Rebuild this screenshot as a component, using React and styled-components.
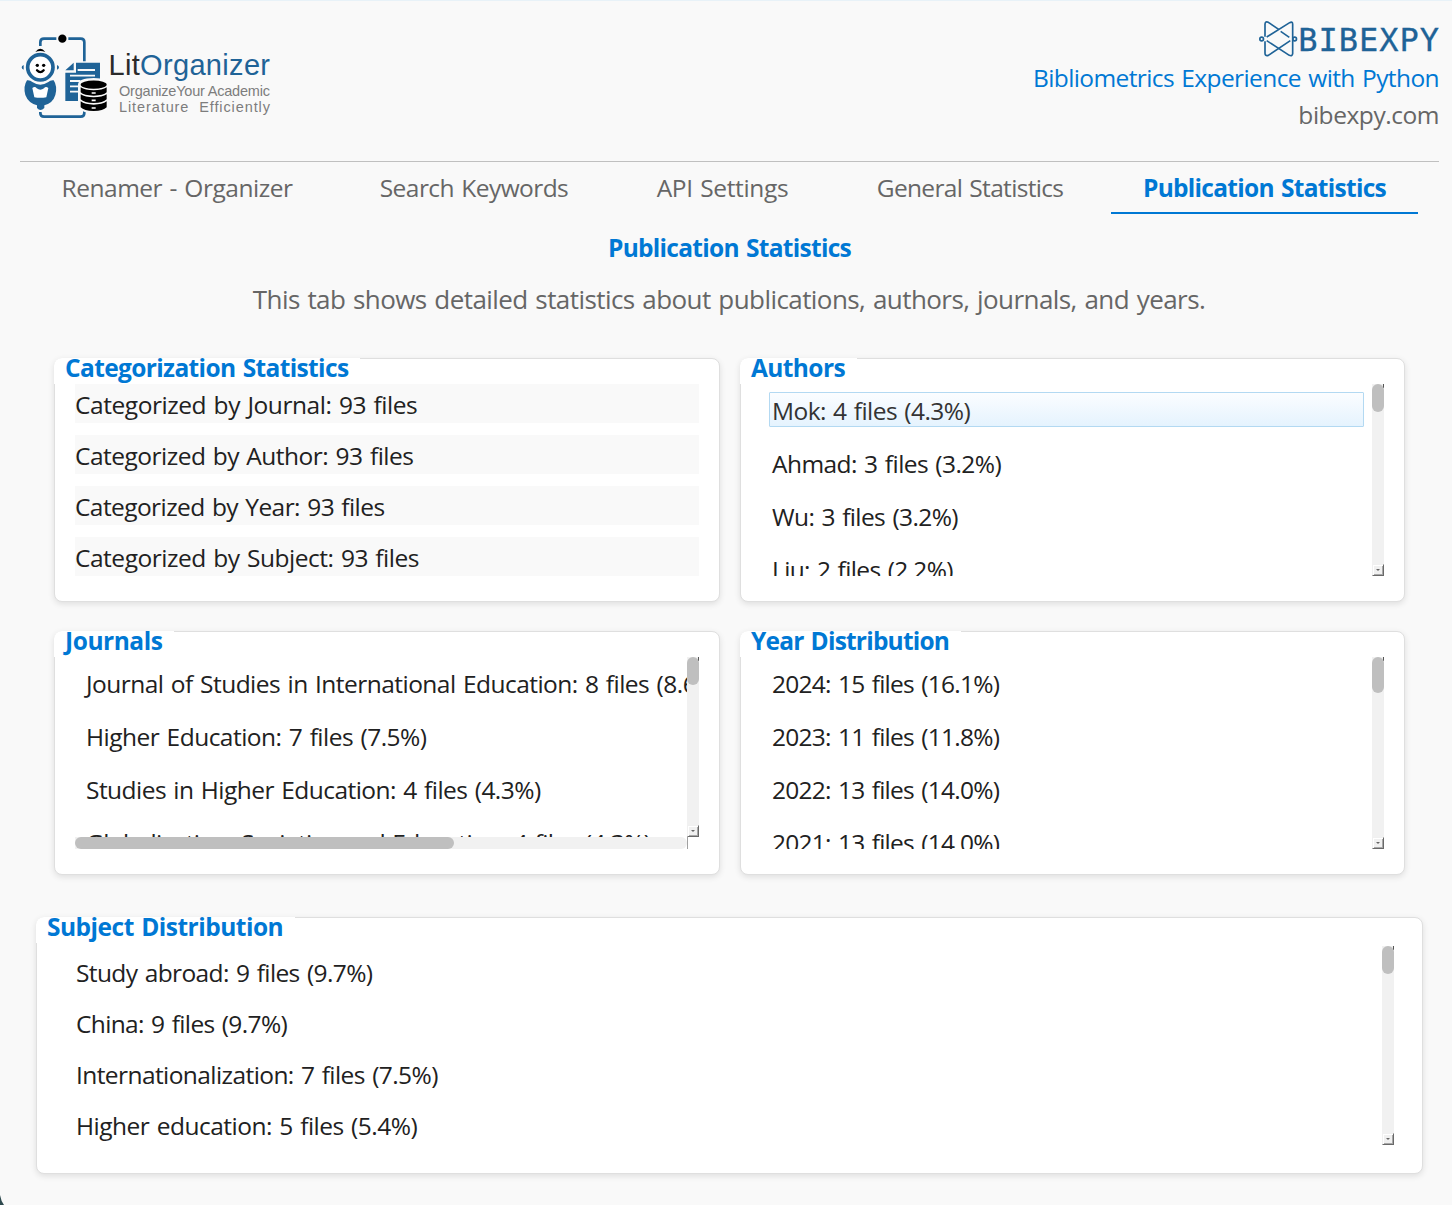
import React from 'react';
import styled, { createGlobalStyle, css } from 'styled-components';

const GlobalStyle = createGlobalStyle`
  *, *::before, *::after { box-sizing: border-box; }
  body {
    margin: 0;
    background: #f9f9f9;
    color: #212121;
    font: 24.5px "Open Sans", "Noto Sans", sans-serif;
    word-spacing: 1.5px;
    overflow: hidden;
  }
`;

const Window = styled.main`
  position: relative;
  width: 1452px;
  height: 1205px;
  overflow: hidden;
  border-top: 1px solid #e8f2f8;
  white-space: nowrap;
`;

const Header = styled.header`
  display: flex;
  justify-content: space-between;
  align-items: flex-start;
  height: 161px;
  margin: 0 13px 0 20px;
  padding-top: 17px;
  border-bottom: 1px solid #c0c0c0;
`;

const AppLogo = styled.svg`
  display: block;
  width: 256px;
  height: 92px;
  margin-top: 12px;
  word-spacing: 0;
`;

const Brand = styled.div`
  display: flex;
  flex-direction: column;
  align-items: flex-end;
`;

const BrandRow = styled.div`
  display: flex;
  height: 41px;
`;

const BrandMark = styled.svg`
  display: block;
  width: 40px;
  height: 42px;
`;

const BrandName = styled.span`
  color: #1f6397;
  font: 32px/44px "DejaVu Sans Mono", monospace;
  letter-spacing: 1px;
  margin-right: -1px;
  -webkit-text-stroke: 0.3px #1f6397;
`;

const BrandLine = styled.span`
  color: ${(p) => (p.$accent ? '#0078d4' : '#666')};
  line-height: 37px;
  letter-spacing: ${(p) => p.$track}px;
`;

const TabBar = styled.nav`
  display: grid;
  grid-template-columns: 310px 284px 213px 282px 307px;
  height: 52px;
  margin-left: 22px;
`;

const Tab = styled.a`
  text-align: center;
  line-height: 51px;
  height: 52px;
  color: #666;
  letter-spacing: ${(p) => p.$track}px;
  border-bottom: 2px solid transparent;
  ${(p) =>
    p.$active &&
    css`
      color: #0078d4;
      font-weight: 700;
      border-bottom-color: #0078d4;
    `}
`;

const Title = styled.h1`
  margin: 16px 0 0 7px;
  text-align: center;
  color: #0078d4;
  font-size: 24.5px;
  font-weight: 700;
  line-height: 36px;
  letter-spacing: -0.71px;
`;

const Subtitle = styled.p`
  margin: 13px 0 0 6px;
  text-align: center;
  color: #666;
  font-size: 26px;
  line-height: 40px;
  letter-spacing: -0.57px;
`;

const CardGrid = styled.div`
  display: grid;
  grid-template-columns: 666px 665px;
  gap: 29px 20px;
  margin: 39px 0 42px 54px;
`;

const Card = styled.section`
  background: #fff;
  border: 1px solid #dfdfdf;
  border-radius: 8px;
  box-shadow: 0 2px 6px rgba(0, 0, 0, 0.11);
  height: ${(p) => (p.$wide ? 257 : 244)}px;
  ${(p) =>
    p.$wide &&
    css`
      width: 1387px;
      margin-left: 36px;
    `}
`;

const Legend = styled.h2`
  width: ${(p) => p.$width}px;
  height: 26px;
  margin: -1px 0 0 -1px;
  padding-left: 11px;
  background: #fff;
  border-top-left-radius: 8px;
  color: #0078d4;
  font-size: 24.5px;
  font-weight: 700;
  line-height: 20px;
  letter-spacing: ${(p) => p.$track}px;
`;

const CategoryList = styled.div`
  display: grid;
  gap: 12px;
  margin: 0 20px;
`;

const CategoryRow = styled.div`
  height: 39px;
  line-height: 41px;
  background: #f9f9f9;
  letter-spacing: ${(p) => p.$track}px;
`;

const ListBox = styled.div`
  display: grid;
  grid-template-columns: 1fr 12px;
  grid-template-rows: 1fr;
  height: 192px;
  margin: 0 20px;
  ${(p) => p.$hscroll && css`grid-template-rows: 1fr 12px;`}
  ${(p) =>
    p.$wide &&
    css`
      height: 199px;
      margin: 3px 28px 0 20px;
      padding-left: 8px;
    `}
`;

const Items = styled.ul`
  list-style: none;
  margin: 0;
  padding: 8px;
  min-width: 0;
  min-height: 0;
  overflow: hidden;
  display: flex;
  flex-direction: column;
  gap: ${(p) => p.$gap}px;
`;

const Item = styled.li`
  flex: none;
  height: 35px;
  line-height: 35px;
  padding-left: 2px;
  border: 1px solid transparent;
  border-radius: 1px;
  letter-spacing: ${(p) => p.$track}px;
  ${(p) =>
    p.$selected &&
    css`
      color: #333;
      border-color: #b3d9f2;
      background: linear-gradient(#fbfdff, #e5f3fe);
    `}
`;

const VTrack = styled.div`
  display: flex;
  flex-direction: column;
  justify-content: space-between;
  background: linear-gradient(#555, #555) top right / 1px 4px no-repeat, #f1f1f1;
`;

const VThumb = styled.div`
  height: ${(p) => p.$size}px;
  border-radius: 6px;
  background: #bfbfbf;
`;

const StepButton = styled.div`
  display: grid;
  place-items: center;
  height: 12px;
  background: #f0f0f0;
  border: 1px solid;
  border-color: #f0f0f0 #696969 #696969 #f0f0f0;
  box-shadow: inset 1px 1px #fff, inset -1px -1px #a8a8a8;

  &::before {
    content: '';
    border: 2px solid transparent;
    border-top-color: #666;
    border-bottom: 0;
  }
`;

const HTrack = styled.div`
  background: #f1f1f1;
  border-radius: 0 6px 6px 0;
`;

const HThumb = styled.div`
  width: 379px;
  height: 12px;
  border-radius: 6px;
  background: #bfbfbf;
`;

const Corner = styled.div`
  border-left: 1px solid #a0a0a0;
`;

const WindowEdge = styled.svg`
  position: absolute;
  left: 0;
  bottom: 0;
  width: 4px;
  height: 10px;
`;

const BLUE = '#1f6397';

function LitOrganizerLogo() {
  return (
    <AppLogo viewBox="0 0 256 92">
      <g transform="translate(-5 -2) scale(0.33333)">
        <g fill="none" stroke={BLUE} strokeWidth="8">
          <path d="M76 54V43q0-11 11-11h37M160 32h37q11 0 11 11v57" />
          <path d="M76 252v3q0 11 11 11h110q11 0 11-11v-6" />
        </g>
        <circle cx="142" cy="32" r="12.5" />
        <path d="M61 72Q76 52 91 72Q76 66 61 72Z" />
        <circle cx="76" cy="118" r="38" fill="#fff" stroke={BLUE} strokeWidth="11" />
        <path d="M26 111v14q-6-2-6-7t6-7zM126 111v14q6-2 6-7t-6-7z" fill={BLUE} />
        <circle cx="67" cy="112" r="5" />
        <circle cx="86" cy="112" r="5" />
        <path d="M66 127q10 11 20 0" fill="none" stroke="#000" strokeWidth="7" strokeLinecap="round" />
        <path
          d="M36 157Q46 156 52 162Q76 178 100 162Q106 156 116 157Q128 175 121 201Q114 225 88 232V240Q76 252 66 240V232Q40 225 31 201Q24 175 36 157Z"
          fill={BLUE}
        />
        <path d="M52 180Q60 174 65 181Q76 189 87 181Q92 174 100 180L94 208Q76 211 58 208Z" fill="#fff" />
        <path d="M151 127L176 104V127Z" fill={BLUE} />
        <path d="M183 104H255V170H200V219H151V134H183Z" fill={BLUE} />
        <path
          d="M188 126H240M165 143H240M165 159H196M165 175H196M165 191H196"
          fill="none"
          stroke="#f9f9f9"
          strokeWidth="5.5"
        />
        <path d="M189 170Q190 150 236 150T283 170V240Q270 256 236 256T189 238Z" fill="#f9f9f9" />
        <ellipse cx="236" cy="170" rx="39" ry="12.5" />
        <path d="M197 178Q210 187 236 187T275 178V193Q265 203 236 203T197 193Z" />
        <path d="M197 199Q210 208 236 208T275 199V214Q265 225 236 225T197 214Z" />
        <path d="M197 220Q210 230 236 230T275 220V238Q265 249 236 249T197 238Z" />
        <path d="M230 195h12M230 217h12M230 240h12" stroke="#fff" strokeWidth="5" />
      </g>
      <g fontFamily="Liberation Sans, Arial, sans-serif">
        <text x="88.5" y="45" fontSize="29" textLength="161.5" fill="#2b2b2b">
          Lit<tspan fill={BLUE}>Organizer</tspan>
        </text>
        <g fill="#7d7d7d" fontSize="14.5">
          <text x="99" y="66" textLength="151">OrganizeYour Academic</text>
          <text x="99" y="82" textLength="151">Literature{'\u00a0 '}Efficiently</text>
        </g>
      </g>
    </AppLogo>
  );
}

function BibexpyMark() {
  return (
    <BrandMark viewBox="714 24 120 126" fill="none" stroke={BLUE} strokeWidth="5" strokeLinejoin="round">
      <path d="M735 80V42Q736 33 745 37L776 58M782 64L808 82" />
      <path d="M740 81L809 38Q818 33 818 43V131Q817 140 808 136L740 92" />
      <path d="M811 92L745 136Q735 139 735 130V94" />
      <circle cx="725" cy="87" r="5.5" />
      <circle cx="824" cy="87" r="5.5" />
    </BrandMark>
  );
}

function ScrollBar({ thumb }) {
  return (
    <VTrack>
      <VThumb $size={thumb} />
      <StepButton />
    </VTrack>
  );
}

function StatList({ rows, gap = 18, thumb = 28, selected, hscroll, wide }) {
  return (
    <ListBox $hscroll={hscroll} $wide={wide}>
      <Items $gap={gap}>
        {rows.map(([label, track], i) => (
          <Item key={label} $track={track} $selected={i === selected}>
            {label}
          </Item>
        ))}
      </Items>
      <ScrollBar thumb={thumb} />
      {hscroll && (
        <>
          <HTrack>
            <HThumb />
          </HTrack>
          <Corner />
        </>
      )}
    </ListBox>
  );
}

const TABS = [
  ['Renamer - Organizer', -0.48],
  ['Search Keywords', -0.56],
  ['API Settings', -0.35],
  ['General Statistics', -0.68],
  ['Publication Statistics', -0.71],
];

const CATEGORIES = [
  ['Categorized by Journal: 93 files', -0.44],
  ['Categorized by Author: 93 files', -0.51],
  ['Categorized by Year: 93 files', -0.58],
  ['Categorized by Subject: 93 files', -0.47],
];

const AUTHORS = [
  ['Mok: 4 files (4.3%)', -0.57],
  ['Ahmad: 3 files (3.2%)', -0.57],
  ['Wu: 3 files (3.2%)', -0.61],
  ['Liu: 2 files (2.2%)', -0.65],
];

const JOURNALS = [
  ['Journal of Studies in International Education: 8 files (8.6%)', -0.53],
  ['Higher Education: 7 files (7.5%)', -0.52],
  ['Studies in Higher Education: 4 files (4.3%)', -0.54],
  ['Globalisation, Societies and Education: 4 files (4.3%)', -0.59],
];

const YEARS = [
  ['2024: 15 files (16.1%)', -0.73],
  ['2023: 11 files (11.8%)', -0.73],
  ['2022: 13 files (14.0%)', -0.73],
  ['2021: 13 files (14.0%)', -0.73],
];

const SUBJECTS = [
  ['Study abroad: 9 files (9.7%)', -0.61],
  ['China: 9 files (9.7%)', -0.64],
  ['Internationalization: 7 files (7.5%)', -0.58],
  ['Higher education: 5 files (5.4%)', -0.5],
];

export default function App() {
  return (
    <Window>
      <GlobalStyle />
      <Header>
        <LitOrganizerLogo />
        <Brand>
          <BrandRow>
            <BibexpyMark />
            <BrandName>BIBEXPY</BrandName>
          </BrandRow>
          <BrandLine $accent $track={-0.6}>Bibliometrics Experience with Python</BrandLine>
          <BrandLine $track={-0.45}>bibexpy.com</BrandLine>
        </Brand>
      </Header>
      <TabBar>
        {TABS.map(([label, track], i) => (
          <Tab key={label} $track={track} $active={i === 4}>
            {label}
          </Tab>
        ))}
      </TabBar>
      <Title>Publication Statistics</Title>
      <Subtitle>This tab shows detailed statistics about publications, authors, journals, and years.</Subtitle>
      <CardGrid>
        <Card>
          <Legend $width={306} $track={-0.63}>Categorization Statistics</Legend>
          <CategoryList>
            {CATEGORIES.map(([label, track]) => (
              <CategoryRow key={label} $track={track}>{label}</CategoryRow>
            ))}
          </CategoryList>
        </Card>
        <Card>
          <Legend $width={117} $track={-0.6}>Authors</Legend>
          <StatList rows={AUTHORS} selected={0} />
        </Card>
        <Card>
          <Legend $width={120} $track={-0.45}>Journals</Legend>
          <StatList rows={JOURNALS} hscroll />
        </Card>
        <Card>
          <Legend $width={221} $track={-0.79}>Year Distribution</Legend>
          <StatList rows={YEARS} thumb={36} />
        </Card>
      </CardGrid>
      <Card $wide>
        <Legend $width={259} $track={-0.5}>Subject Distribution</Legend>
        <StatList rows={SUBJECTS} gap={16} wide />
      </Card>
      <WindowEdge viewBox="0 0 4 10">
        <path d="M0 0Q1 6 4 10H0Z" fill="#2f4a4f" />
      </WindowEdge>
    </Window>
  );
}
